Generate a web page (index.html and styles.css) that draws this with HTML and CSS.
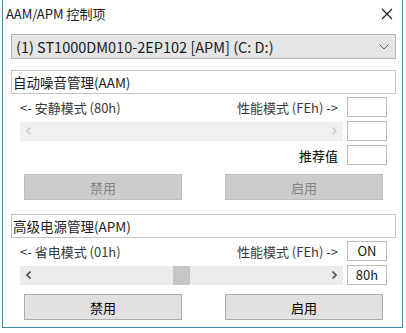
FILE: index.html
```html
<!DOCTYPE html>
<html lang="zh-CN">
<head>
  <meta charset="UTF-8" />
  <meta name="viewport" content="width=device-width, initial-scale=1.0" />
  <title>AAM/APM 控制项</title>
  <link rel="stylesheet" href="styles.css">
</head>
<body>
<div class="window">
  <div class="titlebar">
    <span class="title">AAM/APM 控制项</span>
    <svg class="close" width="12" height="12" viewBox="0 0 12 12">
      <path d="M1 1 L11 11 M11 1 L1 11" stroke="#1a1a1a" stroke-width="1.1" fill="none"/>
    </svg>
  </div>

  <div class="content">
    <div class="select">
      <span>(1) ST1000DM010-2EP102 [APM] (C: D:)</span>
      <svg width="10" height="6" viewBox="0 0 10 6">
        <path d="M0.5 0.5 L5 5 L9.5 0.5" stroke="#606060" stroke-width="1" fill="none"/>
      </svg>
    </div>

    <!-- AAM -->
    <div class="group-label aam">自动噪音管理(AAM)</div>
    <div class="rows">
      <div class="row">
        <div class="ends">
          <span>&lt;- 安静模式 (80h)</span>
          <span>性能模式 (FEh) -&gt;</span>
        </div>
        <div class="box"></div>
      </div>
      <div class="row">
        <div class="scroll disabled">
          <svg class="arr" width="5" height="8" viewBox="0 0 5 8"><path d="M4.5 0.5 L1 4 L4.5 7.5" /></svg>
          <svg class="arr" width="5" height="8" viewBox="0 0 5 8"><path d="M0.5 0.5 L4 4 L0.5 7.5" /></svg>
        </div>
        <div class="box"></div>
      </div>
      <div class="row">
        <div class="ends right"><span class="dark">推荐值</span></div>
        <div class="box"></div>
      </div>
    </div>
    <div class="buttons">
      <button class="btn" disabled>禁用</button>
      <button class="btn" disabled>启用</button>
    </div>

    <!-- APM -->
    <div class="group-label apm">高级电源管理(APM)</div>
    <div class="rows">
      <div class="row">
        <div class="ends">
          <span>&lt;- 省电模式 (01h)</span>
          <span>性能模式 (FEh) -&gt;</span>
        </div>
        <div class="box">ON</div>
      </div>
      <div class="row">
        <div class="scroll">
          <svg class="arr" width="5" height="8" viewBox="0 0 5 8"><path d="M4.5 0.5 L1 4 L4.5 7.5" /></svg>
          <span class="thumb"></span>
          <svg class="arr" width="5" height="8" viewBox="0 0 5 8"><path d="M0.5 0.5 L4 4 L0.5 7.5" /></svg>
        </div>
        <div class="box">80h</div>
      </div>
    </div>
    <div class="buttons">
      <button class="btn">禁用</button>
      <button class="btn">启用</button>
    </div>
  </div>
</div>
</body>
</html>
```

FILE: styles.css
```css
* { box-sizing: border-box; margin: 0; padding: 0; }

body {
  font-family: "Noto Sans CJK SC", "Noto Sans", sans-serif;
  background: #ffffff;
  color: #1a1a1a;
  width: 406px;
  height: 333px;
  overflow: hidden;
}

.window {
  margin-left: 2px;
  width: 401px;
  height: 328px;
  background: #ffffff;
  border: 1px solid #3f8fa4;
  border-top: none;
}

.titlebar {
  height: 27px;
  display: flex;
  align-items: center;
  justify-content: space-between;
  padding: 0 9px 0 3px;
}
.title {
  font-size: 13px;
  color: #1a1a1a;
}

.content {
  padding: 7px 6px 0 8px;
}

.select {
  height: 25px;
  display: flex;
  align-items: center;
  justify-content: space-between;
  padding: 0 6px 0 4px;
  background: #e5e5e5;
  border: 1px solid #b5b5b5;
  font-size: 14.5px;
  color: #1a1a1a;
}

.group-label {
  height: 24px;
  display: flex;
  align-items: center;
  padding-left: 1px;
  border: 1px solid #c4c4c4;
  font-size: 13.5px;
  color: #1a1a1a;
}
.group-label.aam { margin-top: 11px; }
.group-label.apm { margin-top: 14px; }

.rows {
  padding: 3px 9px 0 9px;
  display: flex;
  flex-direction: column;
  gap: 4px;
}
.row {
  display: grid;
  grid-template-columns: 1fr 40px;
  gap: 4px;
  align-items: center;
}
.ends {
  display: flex;
  justify-content: space-between;
  padding-right: 5px;
  font-size: 13px;
  color: #3a3a3a;
}
.ends.right { justify-content: flex-end; }
.ends .dark { color: #000000; }

.box {
  height: 20px;
  border: 1px solid #bcbcbc;
  background: #ffffff;
  font-size: 13px;
  text-align: center;
  line-height: 18px;
  color: #1a1a1a;
}

.scroll {
  height: 19px;
  background: #ececec;
  display: flex;
  align-items: center;
  justify-content: space-between;
  padding: 0 6px;
  position: relative;
}
.scroll .arr path {
  fill: none;
  stroke: #505050;
  stroke-width: 1.6;
}
.scroll.disabled { background: #f0f0f0; }
.scroll.disabled .arr path { stroke: #cfcfcf; }
.thumb {
  position: absolute;
  left: 153px;
  top: 0;
  width: 17px;
  height: 100%;
  background: #c6c6c6;
}

.buttons {
  display: grid;
  grid-template-columns: 158px 158px;
  justify-content: space-between;
  padding: 9px 13px 0 13px;
}
.btn {
  height: 26px;
  font-family: inherit;
  font-size: 13px;
  background: #e1e1e1;
  border: 1px solid #adadad;
  color: #000000;
}
.btn:disabled {
  background: #cccccc;
  border-color: #bfbfbf;
  color: #848484;
}
```
